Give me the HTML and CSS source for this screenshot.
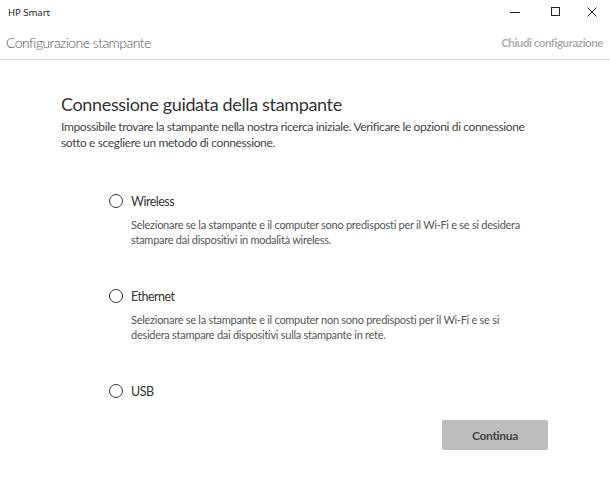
FILE: index.html
```html
<!DOCTYPE html>
<html lang="it">
<head>
<meta charset="utf-8">
<link rel="stylesheet" href="styles.css">
</head>
<body>
<div class="window">
  <div class="titlebar">
    <span class="app-name">HP Smart</span>
    <div class="controls">
      <svg class="ctl" width="46" height="24" viewBox="0 0 46 24"><path d="M18 12.5h10" stroke="#222" stroke-width="1"/></svg>
      <svg class="ctl" width="36" height="24" viewBox="0 0 36 24"><rect x="13.5" y="7.5" width="8" height="8" fill="none" stroke="#222" stroke-width="1"/></svg>
      <svg class="ctl" width="36" height="24" viewBox="0 0 36 24"><path d="M13.5 7.5l9 9M22.5 7.5l-9 9" stroke="#222" stroke-width="1"/></svg>
    </div>
  </div>
  <div class="header">
    <span class="page-title">Configurazione stampante</span>
    <span class="close-link">Chiudi configurazione</span>
  </div>
  <div class="content">
    <h1 class="heading">Connessione guidata della stampante</h1>
    <p class="intro">Impossibile trovare la stampante nella nostra ricerca iniziale. Verificare le opzioni di connessione sotto e scegliere un metodo di connessione.</p>
    <div class="options">
      <div class="option">
        <div class="option-row"><span class="radio"></span><span class="option-label">Wireless</span></div>
        <p class="option-desc">Selezionare se la stampante e il computer sono predisposti per il Wi-Fi e se si desidera stampare dai dispositivi in modalità wireless.</p>
      </div>
      <div class="option">
        <div class="option-row"><span class="radio"></span><span class="option-label">Ethernet</span></div>
        <p class="option-desc">Selezionare se la stampante e il computer non sono predisposti per il Wi-Fi e se si desidera stampare dai dispositivi sulla stampante in rete.</p>
      </div>
      <div class="option option-last">
        <div class="option-row"><span class="radio"></span><span class="option-label">USB</span></div>
      </div>
    </div>
    <div class="actions">
      <button class="btn">Continua</button>
    </div>
  </div>
</div>
</body>
</html>
```
FILE: styles.css
```css
html, body {
  margin: 0;
  padding: 0;
  background: #fff;
}
body {
  font-family: Lato, "Open Sans", sans-serif;
  color: #333;
}
.window {
  width: 610px;
  height: 482px;
  display: flex;
  flex-direction: column;
}
.titlebar {
  height: 26px;
  display: flex;
  align-items: center;
  justify-content: space-between;
}
.app-name {
  font-family: "Noto Sans", sans-serif;
  font-size: 9.5px;
  color: #222;
  padding-left: 8px;
  margin-top: -2px;
}
.controls {
  display: flex;
  align-items: center;
  margin-top: -2px;
}
.ctl { display: block; }
.header {
  height: 33px;
  border-bottom: 1px solid #dcdcdc;
  display: flex;
  align-items: center;
  justify-content: space-between;
  padding: 0 7px 0 6px;
}
.page-title {
  font-size: 14px;
  letter-spacing: -0.55px;
  color: #555;
  font-weight: 300;
}
.close-link {
  font-size: 11.5px;
  letter-spacing: -0.45px;
  color: #adadad;
  font-weight: bold;
}
.content {
  padding-left: 61px;
  padding-top: 32px;
  display: flex;
  flex-direction: column;
}
.heading {
  margin: 0;
  font-size: 18px;
  letter-spacing: -0.35px;
  line-height: 24px;
  font-weight: normal;
  color: #333;
}
.intro {
  margin: 3px 0 0;
  font-size: 12px;
  letter-spacing: -0.37px;
  line-height: 16px;
  color: #444;
  width: 475px;
}
.options {
  padding-left: 48px;
  margin-top: 40px;
  display: flex;
  flex-direction: column;
}
.option { margin-bottom: 39px; }
.option-row {
  display: flex;
  align-items: center;
  height: 20px;
  gap: 8px;
}
.radio {
  width: 12px;
  height: 12px;
  border: 1.5px solid #333;
  border-radius: 50%;
}
.option-label {
  font-size: 12.5px;
  letter-spacing: -0.5px;
  color: #333;
}
.option-desc {
  margin: 6px 0 0 22px;
  font-size: 11px;
  letter-spacing: -0.27px;
  line-height: 15px;
  color: #555;
  width: 400px;
}
.option-last { margin-bottom: 0; }
.actions {
  display: flex;
  justify-content: flex-end;
  padding-right: 62px;
  margin-top: 19px;
}
.btn {
  width: 106px;
  height: 30px;
  border: none;
  border-radius: 2px;
  background: #bcbcbc;
  color: #444;
  font-family: inherit;
  font-size: 12px;
  letter-spacing: -0.3px;
  font-weight: bold;
}
```
